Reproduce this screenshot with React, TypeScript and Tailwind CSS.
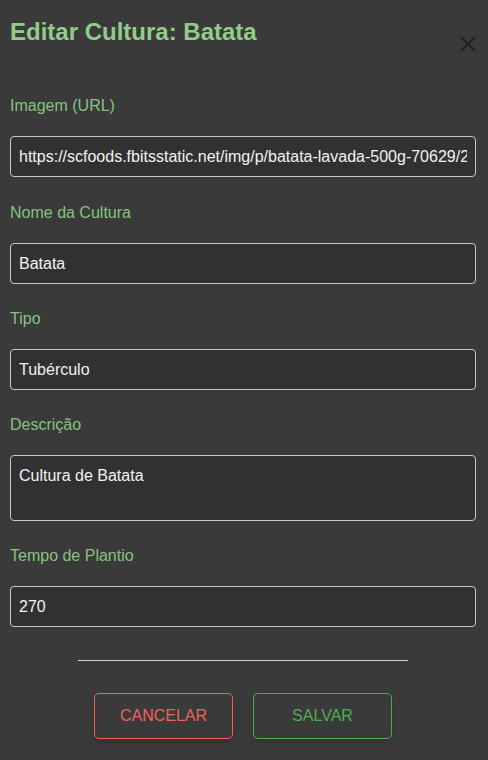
import { useState } from 'react';

const fields = [
  { label: 'Imagem (URL)', value: 'https://scfoods.fbitsstatic.net/img/p/batata-lavada-500g-70629/2', gap: 'mb-[24px]' },
  { label: 'Nome da Cultura', value: 'Batata', gap: 'mb-[23px]' },
  { label: 'Tipo', value: 'Tubérculo', gap: 'mb-[23px]' },
];

export default function App() {
  const [descricao, setDescricao] = useState('Cultura de Batata');
  const [tempo, setTempo] = useState('270');

  return (
    <div
      className="min-h-[760px] bg-[#3a3a3a] pt-[16px] pl-[10px] pr-[12px]"
      style={{ fontFamily: '"Liberation Sans", Arial, sans-serif' }}
    >
      <div className="flex items-start justify-between">
        <h2 className="text-2xl font-bold text-[#92cc88]">Editar Cultura: Batata</h2>
        <button className="mt-[20px] h-4 w-4 text-[#202020]" aria-label="Fechar">
          <svg width="16" height="16" viewBox="0 0 16 16" fill="none" stroke="currentColor" strokeWidth="2">
            <path d="M1 1 L15 15 M15 1 L1 15" />
          </svg>
        </button>
      </div>

      <form className="mt-[42px]">
        {fields.map((f) => (
          <div key={f.label} className={f.gap}>
            <label className="mb-[18px] block text-base leading-6 text-[#86c380]">{f.label}</label>
            <input
              defaultValue={f.value}
              className="h-[41px] w-full rounded border border-[#c8c8c8] bg-[#313131] px-2 text-base text-[#f2f2f2] outline-none"
            />
          </div>
        ))}

        <div className="mb-[23px]">
          <label className="mb-[18px] block text-base leading-6 text-[#86c380]">Descrição</label>
          <textarea
            value={descricao}
            onChange={(e) => setDescricao(e.target.value)}
            className="block h-[66px] w-full resize-none rounded border border-[#c8c8c8] bg-[#313131] px-2 pt-2 text-base leading-6 text-[#f2f2f2] outline-none"
          />
        </div>

        <div>
          <label className="mb-[18px] block text-base leading-6 text-[#86c380]">Tempo de Plantio</label>
          <input
            value={tempo}
            onChange={(e) => setTempo(e.target.value)}
            className="h-[41px] w-full rounded border border-[#c8c8c8] bg-[#313131] px-2 text-base text-[#f2f2f2] outline-none"
          />
        </div>

        <hr className="mx-auto mt-[33px] w-[330px] border-t border-[#cfcfcf]" />

        <div className="mt-[32px] flex justify-center gap-5">
          <button
            type="button"
            className="h-[46px] w-[139px] rounded-[5px] border border-[#f0625a] text-base text-[#f0625a] shadow-md"
          >
            CANCELAR
          </button>
          <button
            type="button"
            className="h-[46px] w-[139px] rounded-[5px] border border-[#4caf50] text-base text-[#4caf50] shadow-md"
          >
            SALVAR
          </button>
        </div>
      </form>
    </div>
  );
}
